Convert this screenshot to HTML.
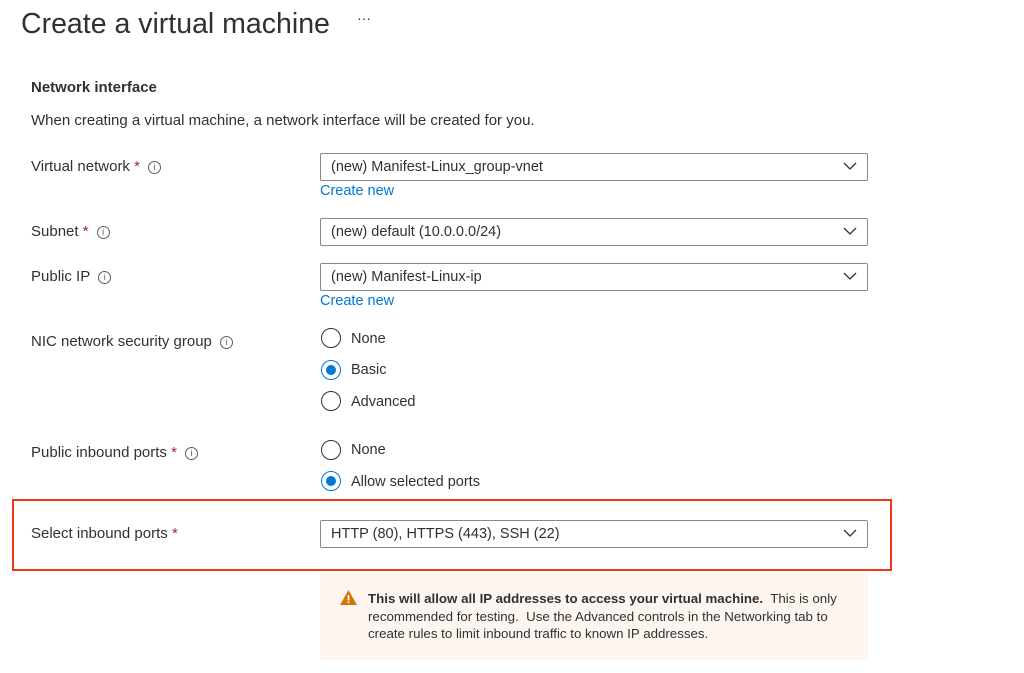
<!DOCTYPE html>
<html><head><style>
body{margin:0;width:1024px;height:673px;background:#fff;font-family:"Liberation Sans",sans-serif;color:#323130;position:relative;overflow:hidden}
.a{position:absolute;white-space:nowrap}
.l{font-size:15px;line-height:18px}
.s{color:#a4262c}
.i{display:inline-block;width:11px;height:11px;border:1px solid #605e5c;border-radius:50%;font-size:9px;line-height:11px;text-align:center;color:#605e5c;margin-left:8px;vertical-align:1px}
.dd{position:absolute;left:320px;width:546px;height:26px;border:1px solid #8a8886;border-radius:2px;font-size:14.5px;line-height:26px;box-sizing:content-box}
.dd span{margin-left:10px}
.dd svg{position:absolute;right:10px;top:8px}
.cn{color:#0078d4;font-size:14.5px}
.r{position:absolute;left:321px;width:18px;height:18px;border:1px solid #323130;border-radius:50%}
.r.on{border-color:#0078d4}
.r.on:after{content:"";position:absolute;left:4px;top:4px;width:10px;height:10px;border-radius:50%;background:#0078d4}
.rt{position:absolute;left:351px;font-size:14.5px;line-height:18px}
</style></head><body>
<div class="a" style="left:21px;top:6px;font-size:28.5px;line-height:36px;color:#323130">Create a virtual machine</div>
<div class="a" style="left:357px;top:10px;font-size:14px">···</div>
<div class="a" style="left:31px;top:79px;font-size:15px;font-weight:bold">Network interface</div>
<div class="a l" style="left:31px;top:112px">When creating a virtual machine, a network interface will be created for you.</div>

<div class="a l" style="left:31px;top:158px">Virtual network <span class="s">*</span><span class="i">i</span></div>
<div class="dd" style="top:153px"><span>(new) Manifest-Linux_group-vnet</span><svg width="14" height="8"><path d="M1 1l6 6 6-6" stroke="#323130" fill="none" stroke-width="1.3"/></svg></div>
<div class="a cn" style="left:320px;top:183px">Create new</div>

<div class="a l" style="left:31px;top:223px">Subnet <span class="s">*</span><span class="i">i</span></div>
<div class="dd" style="top:218px"><span>(new) default (10.0.0.0/24)</span><svg width="14" height="8"><path d="M1 1l6 6 6-6" stroke="#323130" fill="none" stroke-width="1.3"/></svg></div>

<div class="a l" style="left:31px;top:268px">Public IP<span class="i">i</span></div>
<div class="dd" style="top:263px"><span>(new) Manifest-Linux-ip</span><svg width="14" height="8"><path d="M1 1l6 6 6-6" stroke="#323130" fill="none" stroke-width="1.3"/></svg></div>
<div class="a cn" style="left:320px;top:293px">Create new</div>

<div class="a l" style="left:31px;top:333px">NIC network security group<span class="i">i</span></div>
<div class="r" style="top:328px"></div><div class="rt" style="top:330px">None</div>
<div class="r on" style="top:360px"></div><div class="rt" style="top:361px">Basic</div>
<div class="r" style="top:391px"></div><div class="rt" style="top:393px">Advanced</div>

<div class="a l" style="left:31px;top:444px">Public inbound ports <span class="s">*</span><span class="i">i</span></div>
<div class="r" style="top:440px"></div><div class="rt" style="top:441px">None</div>
<div class="r on" style="top:471px"></div><div class="rt" style="top:473px">Allow selected ports</div>

<div class="a" style="left:12px;top:499px;width:876px;height:68px;border:2px solid #f03a17"></div>
<div class="a l" style="left:31px;top:525px">Select inbound ports <span class="s">*</span></div>
<div class="dd" style="top:520px"><span>HTTP (80), HTTPS (443), SSH (22)</span><svg width="14" height="8"><path d="M1 1l6 6 6-6" stroke="#323130" fill="none" stroke-width="1.3"/></svg></div>

<div class="a" style="left:320px;top:573px;width:548px;height:87px;background:#fdf6f0"></div>
<svg class="a" style="left:339px;top:589px" width="19" height="17"><path d="M9.5 1L18 16H1z" fill="#d47500"/><rect x="8.7" y="6" width="1.6" height="5.5" fill="#fff"/><rect x="8.7" y="12.5" width="1.6" height="1.6" fill="#fff"/></svg>
<div class="a" style="left:368px;top:590px;font-size:13.3px;line-height:17.5px;white-space:normal;width:482px"><b>This will allow all IP addresses to access your virtual machine.</b>&nbsp; This is only recommended for testing.&nbsp; Use the Advanced controls in the Networking tab to create rules to limit inbound traffic to known IP addresses.</div>
</body></html>
